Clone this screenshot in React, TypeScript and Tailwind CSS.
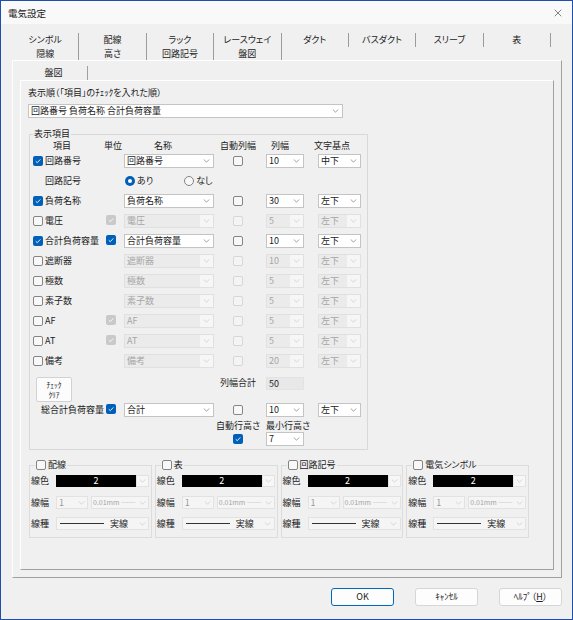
import { X } from "lucide-react";
import type { ReactNode } from "react";

function cn(...parts: (string | false | null | undefined)[]) {
  return parts.filter(Boolean).join(" ");
}

const TABS_TOP = ["シンボル", "配線", "ラック", "レースウェイ", "ダクト", "バスダクト", "スリーブ", "表"];
const TABS_BOTTOM = ["隠線", "高さ", "回路記号", "盤図"];

type Unit = "none" | "on" | "locked";

type ItemRow = {
  label: string;
  on: boolean;
  unit: Unit;
  name: string;
  width: string;
  base: string;
};

const ROWS_BEFORE: ItemRow[] = [
  { label: "回路番号", on: true, unit: "none", name: "回路番号", width: "10", base: "中下" },
];

const ROWS_AFTER: ItemRow[] = [
  { label: "負荷名称", on: true, unit: "none", name: "負荷名称", width: "30", base: "左下" },
  { label: "電圧", on: false, unit: "locked", name: "電圧", width: "5", base: "左下" },
  { label: "合計負荷容量", on: true, unit: "on", name: "合計負荷容量", width: "10", base: "左下" },
  { label: "遮断器", on: false, unit: "none", name: "遮断器", width: "10", base: "左下" },
  { label: "極数", on: false, unit: "none", name: "極数", width: "5", base: "左下" },
  { label: "素子数", on: false, unit: "none", name: "素子数", width: "5", base: "左下" },
  { label: "AF", on: false, unit: "locked", name: "AF", width: "5", base: "左下" },
  { label: "AT", on: false, unit: "locked", name: "AT", width: "5", base: "左下" },
  { label: "備考", on: false, unit: "none", name: "備考", width: "20", base: "左下" },
];

const LINE_GROUPS = ["配線", "表", "回路記号", "電気シンボル"];

function Chevron({ dim }: { dim?: boolean }) {
  return (
    <svg viewBox="0 0 8 5" className="h-[4px] w-[7px]" aria-hidden>
      <path
        d="M0.6 0.6 4 4 7.4 0.6"
        fill="none"
        stroke={dim ? "#c8c8c8" : "#7c7c7c"}
        strokeWidth="0.9"
      />
    </svg>
  );
}

function Check({ checked, disabled }: { checked?: boolean; disabled?: boolean }) {
  if (checked) {
    return (
      <span
        className={cn(
          "inline-flex size-[10px] shrink-0 items-center justify-center rounded-[2px]",
          disabled ? "bg-[#c9c9c9]" : "bg-[#005fb8]",
        )}
      >
        <svg viewBox="0 0 10 10" className="size-[8px]" aria-hidden>
          <path d="M2.2 5.3 4.1 7.1 7.9 3" fill="none" stroke="#fff" strokeWidth="1.1" />
        </svg>
      </span>
    );
  }
  return (
    <span
      className={cn(
        "inline-block size-[10px] shrink-0 rounded-[2px] border",
        disabled ? "border-[#d6d6d6] bg-[#f4f4f4]" : "border-[#858585] bg-[#f8f8f8]",
      )}
    />
  );
}

function Radio({ on }: { on?: boolean }) {
  if (on) {
    return (
      <span className="inline-flex size-[10px] items-center justify-center rounded-full bg-[#005fb8]">
        <span className="size-[4px] rounded-full bg-white" />
      </span>
    );
  }
  return <span className="inline-block size-[10px] rounded-full border border-[#858585] bg-[#f8f8f8]" />;
}

function Select({
  value,
  className,
  disabled,
}: {
  value: ReactNode;
  className: string;
  disabled?: boolean;
}) {
  return (
    <div
      className={cn(
        "flex h-[14px] shrink-0 border",
        disabled
          ? "border-[#e0e0e0] bg-[#ebebeb] text-[#a6a6a6]"
          : "border-[#c4c4c4] bg-white text-[#1a1a1a]",
        className,
      )}
    >
      <span className="flex-1 truncate pl-[2px] leading-[12px]">{value}</span>
      <span
        className={cn(
          "flex w-[13px] items-center justify-center",
          disabled && "bg-[#f6f6f6]",
        )}
      >
        <Chevron dim={disabled} />
      </span>
    </div>
  );
}

function ItemLine({ row }: { row: ItemRow }) {
  const off = !row.on;
  return (
    <div className="flex h-[20px] items-center">
      <div className="flex w-[76px] items-center gap-[2px] pl-[3px]">
        <Check checked={row.on} />
        <span className="leading-[12px]">{row.label}</span>
      </div>
      <div className="w-[18px]">
        {row.unit === "on" && <Check checked />}
        {row.unit === "locked" && <Check checked disabled />}
      </div>
      <Select value={row.name} className="w-[90px]" disabled={off} />
      <div className="flex w-[48px] justify-center">
        <Check disabled={off} />
      </div>
      <Select value={row.width} className="ml-[4px] w-[38px]" disabled={off} />
      <Select value={row.base} className="ml-[14px] w-[43px]" disabled={off} />
    </div>
  );
}

function LineGroup({ title }: { title: string }) {
  return (
    <fieldset className="border border-[#dcdcdc] px-[1px] pb-[7px]">
      <legend className="ml-[4px] flex h-[12px] items-center gap-[2px] px-[1px]">
        <Check />
        <span className="leading-[12px]">{title}</span>
      </legend>
      <div className="mt-[4px] flex h-[12px] items-center">
        <span className="w-[25px] leading-[12px]">線色</span>
        <div className="flex h-[12px] w-[80px] items-center justify-center bg-black leading-[12px] text-white">
          2
        </div>
        <div className="flex h-[12px] w-[13px] items-center justify-center border border-[#e2e2e2] bg-[#f7f7f7]">
          <Chevron dim />
        </div>
      </div>
      <div className="mt-[9px] flex h-[13px] items-center">
        <span className="w-[25px] leading-[12px]">線幅</span>
        <div className="flex h-[13px] w-[32px] items-center border border-[#e2e2e2] bg-[#f5f5f5] text-[#9a9a9a]">
          <span className="flex-1 pl-[2px] leading-[11px]">1</span>
          <span className="flex w-[11px] justify-center">
            <Chevron dim />
          </span>
        </div>
        <div className="ml-[3px] flex h-[13px] w-[58px] items-center border border-[#e2e2e2] bg-[#f5f5f5] text-[#a3a3a3]">
          <span className="flex-1 truncate pl-[1px] text-[7px] leading-[11px]">0.01mm ──</span>
          <span className="flex w-[11px] justify-center">
            <Chevron dim />
          </span>
        </div>
      </div>
      <div className="mt-[8px] flex h-[13px] items-center">
        <span className="w-[25px] leading-[12px]">線種</span>
        <div className="flex h-[13px] w-[93px] items-center border border-[#e2e2e2] bg-[#f5f5f5]">
          <span className="ml-[3px] w-[44px] border-t border-[#333]" />
          <span className="ml-[6px] flex-1 leading-[11px]">実線</span>
          <span className="flex w-[12px] justify-center">
            <Chevron dim />
          </span>
        </div>
      </div>
    </fieldset>
  );
}

export default function App() {
  return (
    <div className="flex h-[620px] w-[573px] flex-col overflow-hidden border border-[#1f4fae] bg-[#f0f0f0] font-['Noto_Sans_CJK_JP','Noto_Sans',sans-serif] text-[9px] text-[#1b1b1b] [font-feature-settings:'palt']">
      <div className="flex h-[23px] shrink-0 items-center justify-between bg-[#f9f9f9] pl-[7px] pr-[8px]">
        <span className="text-[9.5px] leading-[12px]">電気設定</span>
        <X className="size-[12px] text-[#333]" strokeWidth={1.2} />
      </div>

      <div className="flex flex-1 flex-col pl-[11px] pr-[10px] pt-[9px]">
        <div className="grid h-[14px] w-[539px] grid-cols-8">
          {TABS_TOP.map((t) => (
            <div
              key={t}
              className="flex items-center justify-center border-r border-[#9c9c9c] leading-[12px]"
            >
              {t}
            </div>
          ))}
        </div>
        <div className="grid h-[13px] w-[539px] grid-cols-8">
          {TABS_BOTTOM.map((t) => (
            <div
              key={t}
              className="flex items-center justify-center border-r border-[#9c9c9c] leading-[12px]"
            >
              {t}
            </div>
          ))}
        </div>

        <div className="flex h-[518px] flex-col border border-t-white border-l-white border-r-[#a0a0a0] border-b-[#a0a0a0] px-[7px] pt-[5px]">
          <div className="flex h-[14px] w-[68px] items-center justify-center border-r border-[#a0a0a0] leading-[12px]">
            盤図
          </div>
          <div className="h-[490px] border border-t-white border-l-white border-r-[#a0a0a0] border-b-[#a0a0a0] pl-[7px] pt-[6px]">
            <div className="h-[12px] leading-[12px]">表示順（「項目」のﾁｪｯｸを入れた順）</div>
            <Select value="回路番号 負荷名称 合計負荷容量" className="mt-[5px] w-[315px]" />

            <fieldset className="ml-[1px] mt-[10px] w-[339px] border border-[#d8d8d8] pb-[3px]">
              <legend className="ml-[3px] h-[12px] px-[1px] leading-[12px]">表示項目</legend>

              <div className="flex h-[11px] items-center leading-[11px]">
                <span className="ml-[14px] w-[36px] text-center">項目</span>
                <span className="ml-[16px] w-[34px] text-center">単位</span>
                <span className="ml-[16px] w-[34px] text-center">名称</span>
                <span className="ml-[38px] w-[40px] text-center">自動列幅</span>
                <span className="ml-[8px] w-[28px] text-center">列幅</span>
                <span className="ml-[18px] w-[40px] text-center">文字基点</span>
              </div>

              {ROWS_BEFORE.map((r) => (
                <ItemLine key={r.label} row={r} />
              ))}
              <div className="flex h-[20px] items-center">
                <span className="w-[94px] pl-[15px] leading-[12px]">回路記号</span>
                <span className="ml-[1px] flex items-center gap-[2px]">
                  <Radio on />
                  <span className="leading-[12px]">あり</span>
                </span>
                <span className="ml-[31px] flex items-center gap-[2px]">
                  <Radio />
                  <span className="leading-[12px]">なし</span>
                </span>
              </div>
              {ROWS_AFTER.map((r) => (
                <ItemLine key={r.label} row={r} />
              ))}

              <div className="flex h-[31px] items-start pt-[6px]">
                <button
                  type="button"
                  className="ml-[6px] flex h-[25px] w-[36px] flex-col items-center justify-center rounded-[2px] border border-[#d2d2d2] bg-[#fcfcfc] text-[7.5px] leading-[10px]"
                >
                  <span className="block h-[10px]">ﾁｪｯｸ</span>
                  <span className="block h-[10px]">ｸﾘｱ</span>
                </button>
                <span className="ml-[142px] w-[48px] text-center leading-[12px]">列幅合計</span>
                <div className="ml-[4px] flex h-[13px] w-[38px] items-center border border-[#e3e3e3] bg-[#e8e8e8] pl-[2px] leading-[12px]">
                  50
                </div>
              </div>

              <div className="flex h-[16px] items-center">
                <span className="w-[76px] pl-[11px] leading-[12px]">総合計負荷容量</span>
                <div className="w-[18px]">
                  <Check checked />
                </div>
                <Select value="合計" className="w-[90px]" />
                <div className="flex w-[48px] justify-center">
                  <Check />
                </div>
                <Select value="10" className="ml-[4px] w-[38px]" />
                <Select value="左下" className="ml-[14px] w-[43px]" />
              </div>

              <div className="mt-[2px] flex h-[12px] items-center leading-[12px]">
                <span className="ml-[184px] w-[48px] text-center">自動行高さ</span>
                <span className="ml-[4px]">最小行高さ</span>
              </div>
              <div className="flex h-[14px] items-center">
                <div className="ml-[184px] flex w-[48px] justify-center">
                  <Check checked />
                </div>
                <Select value="7" className="ml-[4px] w-[38px]" />
              </div>
            </fieldset>

            <div className="ml-[1px] mt-[9px] grid w-[500px] grid-cols-4 gap-[3px]">
              {LINE_GROUPS.map((g) => (
                <LineGroup key={g} title={g} />
              ))}
            </div>
          </div>
        </div>

        <div className="mt-[10px] flex justify-end gap-[21px]">
          <button
            type="button"
            className="h-[18px] w-[63px] rounded-[3px] border border-[#0067c0] bg-[#fdfdfd] leading-[16px]"
          >
            OK
          </button>
          <button
            type="button"
            className="h-[18px] w-[63px] rounded-[3px] border border-[#d6d6d6] bg-[#fdfdfd] leading-[16px]"
          >
            ｷｬﾝｾﾙ
          </button>
          <button
            type="button"
            className="h-[18px] w-[63px] rounded-[3px] border border-[#d6d6d6] bg-[#fdfdfd] leading-[16px]"
          >
            ﾍﾙﾌﾟ（<span className="underline">H</span>）
          </button>
        </div>
      </div>
    </div>
  );
}
